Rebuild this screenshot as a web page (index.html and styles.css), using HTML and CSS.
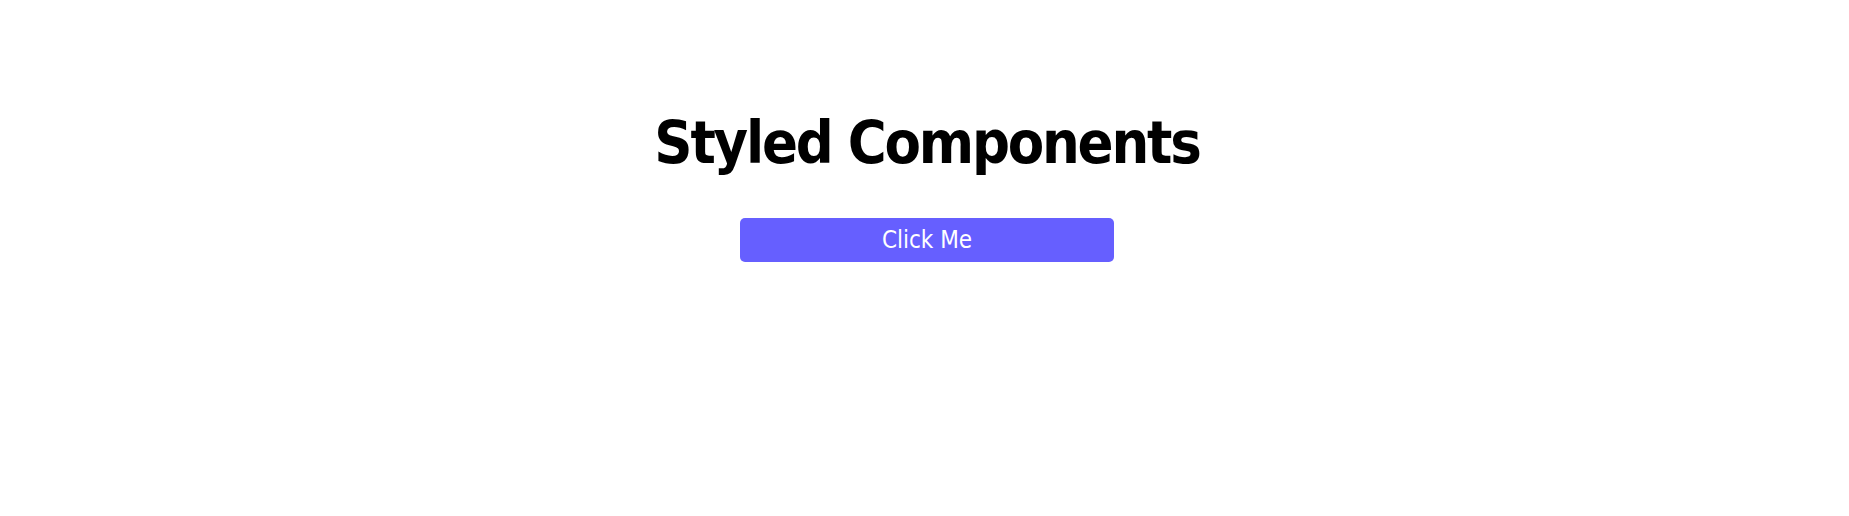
FILE: index.html
```html
<!DOCTYPE html>
<html>
<head>
<meta charset="utf-8">
<link rel="stylesheet" href="styles.css">
</head>
<body>
<div class="app">
  <h1 class="title">Styled Components</h1>
  <button class="btn">Click Me</button>
</div>
</body>
</html>
```
FILE: styles.css
```css
html, body {
  margin: 0;
  padding: 0;
  background: #ffffff;
}
.app {
  display: flex;
  flex-direction: column;
  align-items: center;
  padding-top: 104px;
  padding-left: 5px;
}
.title {
  margin: 0;
  font-family: "DejaVu Sans Condensed", "DejaVu Sans", sans-serif;
  font-stretch: condensed;
  font-size: 59px;
  line-height: 77px;
  letter-spacing: -2.2px;
  font-weight: bold;
  color: #000;
}
.btn {
  margin-top: 37px;
  width: 374px;
  height: 44px;
  border: none;
  border-radius: 5px;
  background: #665fff;
  color: #fff;
  font-family: "DejaVu Sans Condensed", "DejaVu Sans", sans-serif;
  font-stretch: condensed;
  font-size: 24px;
  padding: 0;
}
```
